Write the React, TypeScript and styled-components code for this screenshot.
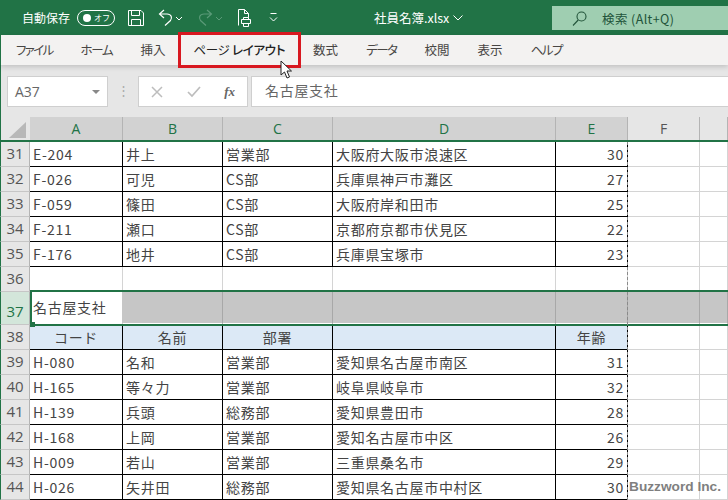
import styled, { createGlobalStyle } from 'styled-components';

const GlobalStyle = createGlobalStyle`
    html, body {
        margin: 0;
        padding: 0;
        background: #fff;
    }
    body {
        font-family: "Noto Sans CJK JP", "Noto Sans", sans-serif;
    }
`;

const COLUMNS = '30px 93px 100px 110px 223px 72px 72px 1fr';

const Page = styled.div`
    position: relative;
    width: 728px;
    height: 500px;
    overflow: hidden;
`;

const TitleBar = styled.div`
    display: flex;
    align-items: center;
    height: 35px;
    padding-left: 22px;
    box-sizing: border-box;
    background: #217346;
    color: #fff;
`;

const AutoSave = styled.span`
    font-size: 12px;
    width: 55px;
`;

const Toggle = styled.span`
    display: flex;
    align-items: center;
    justify-content: space-between;
    box-sizing: border-box;
    width: 38px;
    height: 16px;
    padding: 0 4px 0 5px;
    border: 1px solid #fff;
    border-radius: 8px;
    font-size: 8px;
    margin-right: 13px;
`;

const ToggleDot = styled.span`
    width: 8px;
    height: 8px;
    border-radius: 50%;
    background: #fff;
`;

const QuickIcon = styled.svg<{ $gap: number }>`
    flex: none;
    margin-right: ${({ $gap }) => $gap}px;
`;

const FileName = styled.div`
    display: flex;
    align-items: center;
    gap: 3px;
    position: absolute;
    left: 374px;
    top: 9px;
    color: #fff;
    font-size: 12.5px;
    line-height: 18px;
`;

const SearchBox = styled.div`
    display: flex;
    align-items: center;
    gap: 15px;
    box-sizing: border-box;
    position: absolute;
    left: 552px;
    top: 6px;
    width: 176px;
    height: 24px;
    padding-left: 20px;
    background: #9fceb1;
    color: #22543a;
    font-size: 12.5px;
    letter-spacing: 0.4px;
`;

const TabBar = styled.div`
    display: flex;
    align-items: center;
    box-sizing: border-box;
    height: 30px;
    padding: 0 0 2px 1px;
    background: #f3f2f1;
    border-left: 1px solid #217346;
    box-shadow: 0 2px 5px rgba(0, 0, 0, 0.16);
    position: relative;
`;

const Tab = styled.span<{ $squeeze?: number }>`
    padding: 0 14px;
    font-size: 12.5px;
    font-feature-settings: "palt";
    letter-spacing: ${({ $squeeze = 0 }) => -$squeeze}px;
    color: #484644;
    white-space: nowrap;
`;

const ActiveTab = styled(Tab)`
    color: #222;
`;

const ActiveLabel = styled.span`
    font-weight: 500;
`;

const TabHighlight = styled.div`
    position: absolute;
    left: 178px;
    top: 32px;
    width: 123px;
    height: 36px;
    box-sizing: border-box;
    border: 3px solid #d81820;
`;

const Pointer = styled.svg`
    position: absolute;
    left: 280px;
    top: 60px;
`;

const FormulaArea = styled.div`
    display: flex;
    align-items: flex-start;
    height: 52px;
    padding: 11px 0 0 6px;
    box-sizing: border-box;
    background: #e6e6e6;
    border-left: 1px solid #217346;
`;

const NameBox = styled.div`
    display: flex;
    align-items: center;
    justify-content: space-between;
    box-sizing: border-box;
    width: 101px;
    height: 31px;
    padding: 0 7px;
    background: #fff;
    border: 1px solid #cfcfcf;
    color: #666;
    font-size: 14px;
    font-family: "Open Sans", sans-serif;
`;

const Caret = styled.span`
    width: 0;
    height: 0;
    border-left: 4px solid transparent;
    border-right: 4px solid transparent;
    border-top: 4px solid #888;
`;

const Grip = styled.span`
    width: 30px;
    text-align: center;
    color: #aaa;
    font-size: 13px;
    line-height: 28px;
`;

const FormulaButtons = styled.div`
    display: flex;
    align-items: center;
    justify-content: space-between;
    box-sizing: border-box;
    width: 110px;
    height: 31px;
    padding: 0 12px;
    background: #fff;
    border: 1px solid #cfcfcf;
`;

const Fx = styled.span`
    color: #666;
    font-family: "Liberation Serif", serif;
    font-style: italic;
    font-weight: 700;
    font-size: 13px;
`;

const FormulaInput = styled.div`
    flex: 1;
    box-sizing: border-box;
    height: 31px;
    margin-left: 3px;
    padding-left: 13px;
    background: #fff;
    border-top: 1px solid #cfcfcf;
    border-bottom: 1px solid #cfcfcf;
    border-left: 1px solid #cfcfcf;
    color: #666;
    font-size: 14px;
    line-height: 27px;
    letter-spacing: 0.7px;
`;

const HeaderRow = styled.div`
    display: grid;
    grid-template-columns: ${COLUMNS};
    box-sizing: border-box;
    height: 25px;
    background: #e6e6e6;
    border-bottom: 2px solid #217346;
`;

const Corner = styled.div`
    position: relative;
    background: #e6e6e6;
    border-left: 1px solid #217346;

    &::after {
        content: '';
        position: absolute;
        right: 4px;
        bottom: 2px;
        border-left: 17px solid transparent;
        border-bottom: 16px solid #b8b8b8;
    }
`;

const ColumnHead = styled.div`
    display: flex;
    align-items: center;
    justify-content: center;
    background: #d2d2d2;
    border-right: 1px solid #b4b4b4;
    color: #217346;
    font-size: 14px;
    font-family: "Open Sans", sans-serif;
`;

const PlainHead = styled(ColumnHead)`
    background: #e6e6e6;
    color: #555;
`;

const Row = styled.div<{ $height: number }>`
    display: grid;
    grid-template-columns: ${COLUMNS};
    height: ${({ $height }) => $height}px;
`;

const RowHead = styled.div<{ $selected?: boolean }>`
    display: flex;
    align-items: ${({ $selected }) => ($selected ? 'flex-end' : 'center')};
    justify-content: center;
    padding-bottom: ${({ $selected }) => ($selected ? 3 : 2)}px;
    box-sizing: border-box;
    background: ${({ $selected }) => ($selected ? '#d3e6da' : '#e6e6e6')};
    color: ${({ $selected }) => ($selected ? '#217346' : '#555')};
    border-left: 1px solid #217346;
    border-bottom: 1px solid #c6c6c6;
    border-right: 1px solid #b4b4b4;
    font-size: 15px;
    font-family: "Open Sans", sans-serif;
`;

type CellKind = 'data' | 'number' | 'label' | 'blank' | 'grey' | 'free' | 'current';

const cellBackground = (kind: CellKind) => {
    if (kind === 'label') return '#dce9f6';
    if (kind === 'grey') return '#c6c6c6';
    return '#fff';
};

const cellBorderBottom = (kind: CellKind) => {
    if (kind === 'free' || kind === 'blank') return '1px solid #d4d4d4';
    if (kind === 'grey' || kind === 'current') return '2px solid #fff';
    return '1px solid #000';
};

const cellBorderRight = (kind: CellKind) => {
    if (kind === 'free' || kind === 'blank') return '#d4d4d4';
    if (kind === 'grey') return '#a8a8a8';
    if (kind === 'current') return '#c6c6c6';
    return '#000';
};

const Cell = styled.div<{ $kind: CellKind }>`
    display: flex;
    align-items: center;
    justify-content: ${({ $kind }) =>
        $kind === 'number' ? 'flex-end' : $kind === 'label' ? 'center' : 'flex-start'};
    box-sizing: border-box;
    min-width: 0;
    padding: 0 3px 1px;
    background: ${({ $kind }) => cellBackground($kind)};
    border-right: 1px solid ${({ $kind }) => cellBorderRight($kind)};
    border-bottom: ${({ $kind }) => cellBorderBottom($kind)};
    color: #444;
    font-size: 14px;
    letter-spacing: 0.7px;
    white-space: nowrap;
`;

const Selection = styled.div`
    position: absolute;
    left: 30px;
    top: 290px;
    width: 698px;
    height: 36px;
    box-sizing: border-box;
    border-top: 2px solid #217346;
    border-bottom: 2px solid #217346;
    border-left: 2px solid #217346;

    &::after {
        content: '';
        position: absolute;
        left: -2px;
        bottom: -3px;
        width: 5px;
        height: 5px;
        background: #217346;
    }
`;

const PageBreak = styled.div`
    position: absolute;
    left: 627px;
    top: 142px;
    bottom: 0;
    border-left: 1px dashed #8a8a8a;
`;

const Watermark = styled.div`
    position: absolute;
    left: 629px;
    top: 479px;
    color: #7f7f7f;
    font-family: "Liberation Sans", sans-serif;
    font-size: 13.7px;
    font-weight: 700;
    white-space: nowrap;
`;

type DataRow = [number, string, string, string, string, number];

const upperRows: DataRow[] = [
    [31, 'E-204', '井上', '営業部', '大阪府大阪市浪速区', 30],
    [32, 'F-026', '可児', 'CS部', '兵庫県神戸市灘区', 27],
    [33, 'F-059', '篠田', 'CS部', '大阪府岸和田市', 25],
    [34, 'F-211', '瀬口', 'CS部', '京都府京都市伏見区', 22],
    [35, 'F-176', '地井', 'CS部', '兵庫県宝塚市', 23],
];

const lowerRows: DataRow[] = [
    [39, 'H-080', '名和', '営業部', '愛知県名古屋市南区', 31],
    [40, 'H-165', '等々力', '営業部', '岐阜県岐阜市', 32],
    [41, 'H-139', '兵頭', '総務部', '愛知県豊田市', 28],
    [42, 'H-168', '上岡', '営業部', '愛知名古屋市中区', 26],
    [43, 'H-009', '若山', '営業部', '三重県桑名市', 29],
    [44, 'H-026', '矢井田', '総務部', '愛知県名古屋市中村区', 30],
];

const columnNames = ['A', 'B', 'C', 'D', 'E'];

const renderRow = ([row, code, name, dept, address, age]: DataRow) => (
    <Row key={row} $height={25}>
        <RowHead>{row}</RowHead>
        <Cell $kind="data">{code}</Cell>
        <Cell $kind="data">{name}</Cell>
        <Cell $kind="data">{dept}</Cell>
        <Cell $kind="data">{address}</Cell>
        <Cell $kind="number">{age}</Cell>
        <Cell $kind="free" />
        <Cell $kind="free" />
    </Row>
);

const App = () => (
    <Page>
        <GlobalStyle />
        <TitleBar>
            <AutoSave>自動保存</AutoSave>
            <Toggle>
                <ToggleDot />
                オフ
            </Toggle>
            <QuickIcon $gap={14} width="16" height="16" viewBox="0 0 16 16" fill="none" stroke="#fff">
                <path d="M.5.5h12.5l2.5 2.500v12.500H.5zM3.500.5v5h8v-5M3.500 15.500v-6h9v6" />
            </QuickIcon>
            <QuickIcon $gap={2} width="15" height="17" viewBox="0 0 15 17" fill="none" stroke="#fff" strokeWidth="1.2">
                <path d="M6 1L1.500 5l4.500 4M1.500 5h7.500c4.500 0 5.500 4 3.500 6.500L7 16.500" />
            </QuickIcon>
            <QuickIcon $gap={15} width="8" height="16" viewBox="0 0 8 16" fill="none" stroke="#fff">
                <path d="M1 7l3 3 3-3" />
            </QuickIcon>
            <QuickIcon $gap={2} width="15" height="17" viewBox="0 0 15 17" fill="none" stroke="#5a9a78" strokeWidth="1.2">
                <path d="M9 1l4.500 4L9 9M13.500 5H6C1.500 5 .5 9 2.500 11.500L8 16.500" />
            </QuickIcon>
            <QuickIcon $gap={14} width="8" height="16" viewBox="0 0 8 16" fill="none" stroke="#5a9a78">
                <path d="M1 7l3 3 3-3" />
            </QuickIcon>
            <QuickIcon $gap={17} width="15" height="18" viewBox="0 0 15 18" fill="none" stroke="#fff">
                <path d="M1.500 16.500V.500h6l4 4v4M7.500.500v4h4M4.500 10.500h9v4h-9zM6.500 10.500v-2h5v2M6.500 14.500v3h5v-3" />
            </QuickIcon>
            <QuickIcon $gap={0} width="9" height="10" viewBox="0 0 9 10" fill="none" stroke="#fff">
                <path d="M1.500.500h6M1 4.500l3.500 3.500L8 4.500" />
            </QuickIcon>
        </TitleBar>
        <FileName>
            社員名簿.xlsx
            <svg width="12" height="8" viewBox="0 0 12 8" fill="none" stroke="#fff">
                <path d="M1.500 1.500L6 6l4.500-4.500" />
            </svg>
        </FileName>
        <SearchBox>
            <svg width="15" height="15" viewBox="0 0 15 15" fill="none" stroke="#22543a" strokeWidth="1.1">
                <circle cx="9.500" cy="5.500" r="4.500" />
                <path d="M6.200 9L1 14.500" />
            </svg>
            検索 (Alt+Q)
        </SearchBox>
        <TabBar>
            <Tab $squeeze={1.7}>ファイル</Tab>
            <Tab $squeeze={1.3}>ホーム</Tab>
            <Tab>挿入</Tab>
            <ActiveTab $squeeze={0.3}>
                ページ <ActiveLabel>レイアウト</ActiveLabel>
            </ActiveTab>
            <Tab>数式</Tab>
            <Tab $squeeze={1.5}>データ</Tab>
            <Tab>校閲</Tab>
            <Tab>表示</Tab>
            <Tab $squeeze={1.5}>ヘルプ</Tab>
        </TabBar>
        <FormulaArea>
            <NameBox>
                A37
                <Caret />
            </NameBox>
            <Grip>⋮</Grip>
            <FormulaButtons>
                <svg width="12" height="12" viewBox="0 0 12 12" stroke="#bdbdbd" strokeWidth="1.5">
                    <path d="M1 1l10 10M11 1L1 11" />
                </svg>
                <svg width="14" height="12" viewBox="0 0 14 12" fill="none" stroke="#bdbdbd" strokeWidth="1.7">
                    <path d="M1 6l4 4 8-9" />
                </svg>
                <Fx>fx</Fx>
            </FormulaButtons>
            <FormulaInput>名古屋支社</FormulaInput>
        </FormulaArea>
        <div>
            <HeaderRow>
                <Corner />
                {columnNames.map(name => (
                    <ColumnHead key={name}>{name}</ColumnHead>
                ))}
                <PlainHead>F</PlainHead>
                <PlainHead />
            </HeaderRow>
            {upperRows.map(renderRow)}
            <Row $height={25}>
                <RowHead>36</RowHead>
                <Cell $kind="blank" />
                <Cell $kind="blank" />
                <Cell $kind="blank" />
                <Cell $kind="blank" />
                <Cell $kind="blank" />
                <Cell $kind="free" />
                <Cell $kind="free" />
            </Row>
            <Row $height={33}>
                <RowHead $selected>37</RowHead>
                <Cell $kind="current">名古屋支社</Cell>
                <Cell $kind="grey" />
                <Cell $kind="grey" />
                <Cell $kind="grey" />
                <Cell $kind="grey" />
                <Cell $kind="grey" />
                <Cell $kind="grey" />
            </Row>
            <Row $height={25}>
                <RowHead>38</RowHead>
                <Cell $kind="label">コード</Cell>
                <Cell $kind="label">名前</Cell>
                <Cell $kind="label">部署</Cell>
                <Cell $kind="label" />
                <Cell $kind="label">年齢</Cell>
                <Cell $kind="free" />
                <Cell $kind="free" />
            </Row>
            {lowerRows.map(renderRow)}
        </div>
        <Selection />
        <PageBreak />
        <Watermark>Buzzword Inc.</Watermark>
        <TabHighlight />
        <Pointer width="13" height="20" viewBox="0 0 13 20" fill="#fff" stroke="#222" strokeWidth="1">
            <path d="M1 1v14l3.500-3 2.500 6 2.500-1-2.500-6h4.500z" />
        </Pointer>
    </Page>
);

export default App;
